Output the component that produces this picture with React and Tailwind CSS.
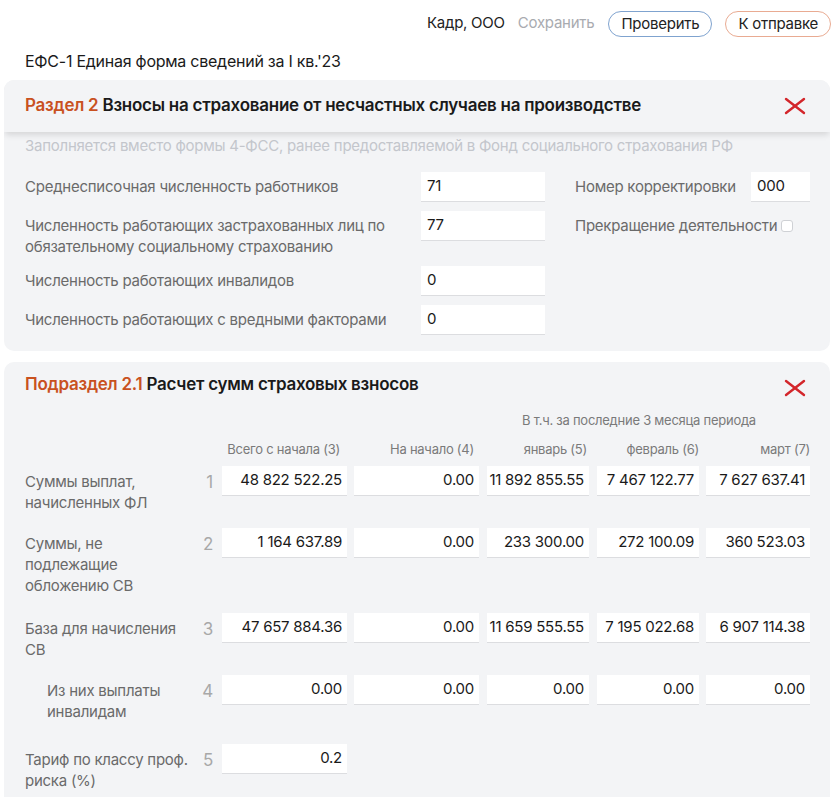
import React from "react";

const font = { fontFamily: "Inter, 'Noto Sans', sans-serif" };

function XIcon() {
  return (
    <svg width="22" height="18" viewBox="0 0 22 18" className="block">
      <line x1="2" y1="2" x2="20" y2="16" stroke="#d3262b" strokeWidth="2.4" strokeLinecap="round" />
      <line x1="20" y1="2" x2="2" y2="16" stroke="#d3262b" strokeWidth="2.4" strokeLinecap="round" />
    </svg>
  );
}

function Field({ value, w = "w-[124px]", align = "left" }) {
  return (
    <div
      className={`${w} h-[30px] bg-white border-b border-[#dcdde0] flex items-center whitespace-nowrap text-[15px] text-[#1a1a1a] ${
        align === "right" ? "justify-end pr-[5px]" : "pl-[6px]"
      }`}
    >
      {value}
    </div>
  );
}

const rows = [
  { n: 1, label: ["Суммы выплат,", "начисленных ФЛ"], h: "h-[62px]", v: ["48 822 522.25", "0.00", "11 892 855.55", "7 467 122.77", "7 627 637.41"] },
  { n: 2, label: ["Суммы, не", "подлежащие", "обложению СВ"], h: "h-[85px]", v: ["1 164 637.89", "0.00", "233 300.00", "272 100.09", "360 523.03"] },
  { n: 3, label: ["База для начисления", "СВ"], h: "h-[62px]", v: ["47 657 884.36", "0.00", "11 659 555.55", "7 195 022.68", "6 907 114.38"] },
  { n: 4, label: ["Из них выплаты", "инвалидам"], h: "h-[69px]", indent: true, v: ["0.00", "0.00", "0.00", "0.00", "0.00"] },
  { n: 5, label: ["Тариф по классу проф.", "риска (%)"], h: "h-[60px]", v: ["0.2"] },
];

const widths = ["w-[125px]", "w-[125px]", "w-[102px]", "w-[102px]", "w-[104px]"];
const margins = ["ml-[9px]", "ml-[7px]", "ml-[8px]", "ml-[8px]", "ml-[7px]"];

export default function App() {
  return (
    <div className="w-[834px] min-h-[797px] bg-white text-[#1a1a1a] tracking-[-0.25px]" style={font}>
      {/* Top bar */}
      <div className="h-[45px] flex items-center justify-end pr-[3px] pt-[2px] text-[15px]">
        <span className="text-[#222]">Кадр, ООО</span>
        <span className="ml-[13px] text-[#a9abb0]">Сохранить</span>
        <button className="ml-[14px] h-[26px] px-[12px] rounded-full border border-[#7fa3cf] text-[#222] leading-none">
          Проверить
        </button>
        <button className="ml-[13px] h-[26px] px-[12px] rounded-full border border-[#e9ab92] text-[#222] leading-none">
          К отправке
        </button>
      </div>

      {/* Title */}
      <div className="pl-[25px] h-[32px] flex items-center text-[16px] text-[#1a1a1a]">
        ЕФС-1 Единая форма сведений за I кв.'23
      </div>

      {/* Section 2 card */}
      <div className="mt-[3px] mx-[4px] rounded-[10px] bg-[#f3f4f6] overflow-hidden">
        <div className="h-[52px] flex items-center justify-between pl-[21px] pr-[24px] bg-[#f3f4f6] shadow-[0_4px_6px_-1px_rgba(0,0,0,0.12)] relative">
          <div className="text-[17px] font-semibold">
            <span className="text-[#c9511f]">Раздел 2</span>{" "}
            <span className="text-[#1a1a1a]">Взносы на страхование от несчастных случаев на производстве</span>
          </div>
          <XIcon />
        </div>
        <div className="pl-[21px] pr-[20px] pt-[4px] pb-[16px]">
          <div className="h-[20px] flex items-center text-[15px] text-[#c3c6cc]">
            Заполняется вместо формы 4-ФСС, ранее предоставляемой в Фонд социального страхования РФ
          </div>
          <div className="mt-[16px] flex">
            <div className="flex flex-col gap-[9px]">
              {[
                { l: ["Среднесписочная численность работников"], v: "71" },
                { l: ["Численность работающих застрахованных лиц по", "обязательному социальному страхованию"], v: "77" },
                { l: ["Численность работающих инвалидов"], v: "0" },
                { l: ["Численность работающих с вредными факторами"], v: "0" },
              ].map((r, i) => (
                <div key={i} className="flex items-start">
                  <div className="w-[396px] pt-[4px] leading-[21px] text-[15px] text-[#6a6a6a]">
                    {r.l.map((x, j) => (
                      <div key={j}>{x}</div>
                    ))}
                  </div>
                  <Field value={r.v} />
                </div>
              ))}
            </div>
            <div className="ml-[30px] flex flex-col gap-[9px]">
              <div className="flex items-start">
                <div className="w-[176px] pt-[4px] leading-[21px] text-[15px] text-[#6a6a6a]">Номер корректировки</div>
                <Field value="000" w="w-[59px]" />
              </div>
              <div className="flex items-center h-[30px] text-[15px] text-[#6a6a6a]">
                Прекращение деятельности
                <span className="ml-[4px] inline-block w-[12px] h-[12px] rounded-[3px] border border-[#cfd1d5] bg-white" />
              </div>
            </div>
          </div>
        </div>
      </div>

      {/* Subsection 2.1 card */}
      <div className="mt-[11px] mx-[4px] rounded-t-[10px] bg-[#f3f4f6]">
        <div className="h-[44px] flex items-center justify-between pl-[21px] pr-[24px] pt-[2px]">
          <div className="text-[17px] font-semibold">
            <span className="text-[#c9511f]">Подраздел 2.1</span>{" "}
            <span className="text-[#1a1a1a]">Расчет сумм страховых взносов</span>
          </div>
          <div className="mt-[6px]">
            <XIcon />
          </div>
        </div>
        <div className="pl-[21px]">
          <div className="h-[30px] flex items-end pb-[6px] pl-[497px] text-[13px] text-[#7a7a7a]">
            В т.ч. за последние 3 месяца периода
          </div>
          <div className="h-[27px] flex items-center text-[13px] text-[#7a7a7a] whitespace-nowrap">
            <div className="w-[188px]" />
            <div className="w-[125px] ml-[9px] text-right pr-[7px]">Всего с начала (3)</div>
            <div className="w-[125px] ml-[7px] text-right pr-[5px]">На начало (4)</div>
            <div className="w-[102px] ml-[8px] text-right pr-[2px]">январь (5)</div>
            <div className="w-[102px] ml-[8px] text-right">февраль (6)</div>
            <div className="w-[104px] ml-[7px] text-right">март (7)</div>
          </div>
          <div className="pt-[3px]">
            {rows.map((r) => (
              <div key={r.n} className={`flex items-start ${r.h}`}>
                <div
                  className={`w-[170px] pt-[5px] leading-[21px] text-[15px] text-[#6a6a6a] ${
                    r.indent ? "pl-[22px]" : ""
                  }`}
                >
                  {r.label.map((x, j) => (
                    <div key={j}>{x}</div>
                  ))}
                </div>
                <div className="w-[18px] pt-[4px] text-right text-[17px] leading-[24px] text-[#a8a8a8]">{r.n}</div>
                {r.v.map((v, i) => (
                  <div key={i} className={margins[i]}>
                    <Field value={v} w={widths[i]} align="right" />
                  </div>
                ))}
              </div>
            ))}
          </div>
        </div>
      </div>
    </div>
  );
}
